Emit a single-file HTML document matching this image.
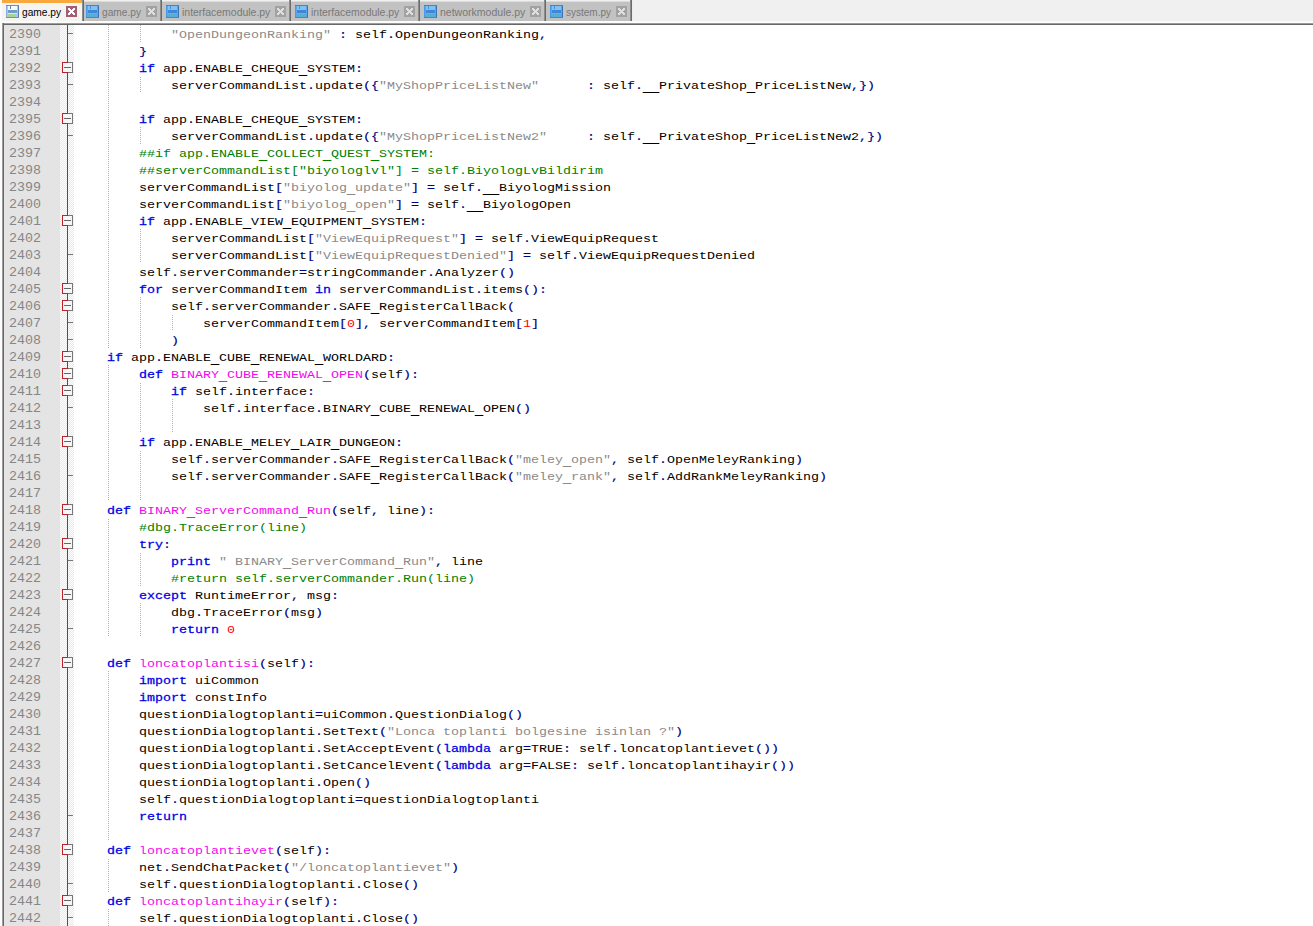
<!DOCTYPE html>
<html><head><meta charset="utf-8"><title>game.py - Notepad++</title>
<style>
html,body{margin:0;padding:0}
body{width:1313px;height:926px;overflow:hidden;background:#f0f0f0;position:relative;font-family:"Liberation Sans",sans-serif}
#tabbar{position:absolute;left:0;top:0;width:1313px;height:23px;background:#f0f0f0}
.tb{position:absolute;top:1px;height:20px;background:#c2c2c2;border-top:1px solid #dcdcdc;box-sizing:border-box}
.tb.act{top:0;height:22px;background:#f5f4f1;border-top:3px solid #f8a83c}
.sep{position:absolute;top:0;width:2px;height:22px;background:linear-gradient(90deg,#8c8c8c 50%,#6b6b6b 50%)}
.sepl{position:absolute;top:1px;width:1px;height:20px;background:#ececec}
.ic{position:absolute;top:5px;width:13px;height:13px}
.cl{position:absolute;top:6px;width:11px;height:11px}
.tx{position:absolute;top:4px;font-size:11px;line-height:17px;white-space:nowrap;color:#787878;transform-origin:0 50%}
.tx.act{color:#000}
#lwhite{position:absolute;left:0;top:0;width:2px;height:926px;background:#fdfdfd}
#bline1{position:absolute;left:0;top:21px;width:1313px;height:2px;background:#fcfcfc}
#bline2{position:absolute;left:2px;top:23px;width:1311px;height:2px;background:linear-gradient(#9c9c9c 50%,#686868 50%)}
#lline{position:absolute;left:2px;top:23px;width:2px;height:903px;background:linear-gradient(90deg,#9c9c9c 50%,#686868 50%)}
#ed{position:absolute;left:4px;top:25px;width:1309px;height:901px;background:#fff}
#lnm{position:absolute;left:4px;top:25px;width:56px;height:901px;background:#e4e4e4}
#fm{position:absolute;left:60px;top:25px;width:14px;height:901px;background:repeating-conic-gradient(#ffffff 0% 25%,#e8e8e8 0% 50%) 0 0/2px 2px}
#fl{position:absolute;left:67px;top:25px;width:1px;height:901px;background:#b8242a}
.ln,.r{font-family:"Liberation Mono",monospace;font-size:13.333px;line-height:17px;height:17px;white-space:pre}
.r>span{display:block;height:17px;transform:translateY(1px) scaleY(.88);transform-origin:0 12px}
.ln>span{display:block;height:17px;transform:translateY(1px) scaleY(.97);transform-origin:0 12px}
.ln{color:#868686}
#nums{position:absolute;left:9px;top:25px}
#code{position:absolute;left:75px;top:25px;color:#000}
.u{position:relative;top:3.4px;text-decoration:none;font-weight:bold;-webkit-text-stroke:0.4px currentColor}
.k{color:#0000e4;-webkit-text-stroke:0.3px #0000e4}
.o{color:#000080;-webkit-text-stroke:0.18px #000080}
.s{color:#8a8a8a}
.c{color:#008000}
.n{color:#ff0000}
.d{color:#f408ec}
.g{position:absolute;width:1px;background:linear-gradient(#b0b0b0 50%,#fff 50%) 0 0/1px 2px}
.g.e{background:linear-gradient(#fff 50%,#b0b0b0 50%) 0 0/1px 2px}
.bx{position:absolute;left:62px;width:11px;height:11px;box-sizing:border-box;background:#f6f6f6;border:1px solid #777;border-left-color:#b8242a}
.bx:before{content:"";position:absolute;left:-1px;top:-1px;width:6px;height:1px;background:#b8242a}
.bx:after{content:"";position:absolute;left:-1px;bottom:-1px;width:6px;height:1px;background:#b8242a}
.bx b{position:absolute;left:1px;top:4px;width:7px;height:1px;background:#666}
.tk{position:absolute;left:68px;width:5px;height:1px;background:#777}
</style></head><body>
<div id="tabbar">
<div class="tb act" style="left:2px;width:80px"></div><div class="sep" style="left:82px"></div>
<svg class="ic" style="left:6px" viewBox="0 0 13 13" shape-rendering="crispEdges"><rect width="13" height="13" fill="#6f8cc6"/><rect x="0" y="1" width="1" height="11" fill="#8fa9e6"/><rect x="12" y="1" width="1" height="11" fill="#5f7db4"/><rect x="1" y="1" width="11" height="11" fill="#a9c6ee"/><rect x="2" y="1" width="9" height="4" fill="#f6fbff"/><rect x="4" y="1" width="1" height="3" fill="#6c7fa6"/><rect x="2" y="5" width="9" height="3" fill="#6f9fc8"/><rect x="2" y="8" width="9" height="1" fill="#d3e9f3"/><rect x="2" y="9" width="8" height="3" fill="#a9d391"/></svg><span class="tx act" style="left:22px;transform:scaleX(0.9249)">game.py</span><svg class="cl" style="left:66px" viewBox="0 0 11 11" shape-rendering="crispEdges"><rect width="11" height="11" fill="#a05f77"/><g fill="#ffffff"><rect x="2" y="2" width="1" height="1"/><rect x="3" y="2" width="1" height="1"/><rect x="7" y="2" width="1" height="1"/><rect x="8" y="2" width="1" height="1"/><rect x="2" y="3" width="1" height="1"/><rect x="3" y="3" width="1" height="1"/><rect x="4" y="3" width="1" height="1"/><rect x="6" y="3" width="1" height="1"/><rect x="7" y="3" width="1" height="1"/><rect x="8" y="3" width="1" height="1"/><rect x="3" y="4" width="1" height="1"/><rect x="4" y="4" width="1" height="1"/><rect x="5" y="4" width="1" height="1"/><rect x="6" y="4" width="1" height="1"/><rect x="7" y="4" width="1" height="1"/><rect x="4" y="5" width="1" height="1"/><rect x="5" y="5" width="1" height="1"/><rect x="6" y="5" width="1" height="1"/><rect x="3" y="6" width="1" height="1"/><rect x="4" y="6" width="1" height="1"/><rect x="5" y="6" width="1" height="1"/><rect x="6" y="6" width="1" height="1"/><rect x="7" y="6" width="1" height="1"/><rect x="2" y="7" width="1" height="1"/><rect x="3" y="7" width="1" height="1"/><rect x="4" y="7" width="1" height="1"/><rect x="6" y="7" width="1" height="1"/><rect x="7" y="7" width="1" height="1"/><rect x="8" y="7" width="1" height="1"/><rect x="2" y="8" width="1" height="1"/><rect x="3" y="8" width="1" height="1"/><rect x="7" y="8" width="1" height="1"/><rect x="8" y="8" width="1" height="1"/></g></svg>
<div class="tb" style="left:84px;width:76px"></div><div class="sep" style="left:160px"></div><div class="sepl" style="left:162px"></div>
<svg class="ic" style="left:86px" viewBox="0 0 13 13" shape-rendering="crispEdges"><rect width="13" height="13" fill="#3f86cf"/><rect x="0" y="1" width="1" height="11" fill="#4a98e8"/><rect x="12" y="1" width="1" height="11" fill="#3a74b4"/><rect x="1" y="1" width="11" height="11" fill="#5aa6ea"/><rect x="2" y="1" width="9" height="4" fill="#7dc2f2"/><rect x="4" y="1" width="1" height="3" fill="#4f8fcf"/><rect x="2" y="5" width="9" height="3" fill="#3f86d8"/><rect x="2" y="8" width="9" height="1" fill="#66b0ea"/><rect x="2" y="9" width="8" height="3" fill="#58aed0"/></svg><span class="tx" style="left:102px;transform:scaleX(0.9249)">game.py</span><svg class="cl" style="left:146px" viewBox="0 0 11 11" shape-rendering="crispEdges"><rect width="11" height="11" fill="#a2a2a2"/><g fill="#dedede"><rect x="2" y="2" width="1" height="1"/><rect x="3" y="2" width="1" height="1"/><rect x="7" y="2" width="1" height="1"/><rect x="8" y="2" width="1" height="1"/><rect x="2" y="3" width="1" height="1"/><rect x="3" y="3" width="1" height="1"/><rect x="4" y="3" width="1" height="1"/><rect x="6" y="3" width="1" height="1"/><rect x="7" y="3" width="1" height="1"/><rect x="8" y="3" width="1" height="1"/><rect x="3" y="4" width="1" height="1"/><rect x="4" y="4" width="1" height="1"/><rect x="5" y="4" width="1" height="1"/><rect x="6" y="4" width="1" height="1"/><rect x="7" y="4" width="1" height="1"/><rect x="4" y="5" width="1" height="1"/><rect x="5" y="5" width="1" height="1"/><rect x="6" y="5" width="1" height="1"/><rect x="3" y="6" width="1" height="1"/><rect x="4" y="6" width="1" height="1"/><rect x="5" y="6" width="1" height="1"/><rect x="6" y="6" width="1" height="1"/><rect x="7" y="6" width="1" height="1"/><rect x="2" y="7" width="1" height="1"/><rect x="3" y="7" width="1" height="1"/><rect x="4" y="7" width="1" height="1"/><rect x="6" y="7" width="1" height="1"/><rect x="7" y="7" width="1" height="1"/><rect x="8" y="7" width="1" height="1"/><rect x="2" y="8" width="1" height="1"/><rect x="3" y="8" width="1" height="1"/><rect x="7" y="8" width="1" height="1"/><rect x="8" y="8" width="1" height="1"/></g></svg>
<div class="tb" style="left:162px;width:127px"></div><div class="sep" style="left:289px"></div><div class="sepl" style="left:291px"></div>
<svg class="ic" style="left:166px" viewBox="0 0 13 13" shape-rendering="crispEdges"><rect width="13" height="13" fill="#3f86cf"/><rect x="0" y="1" width="1" height="11" fill="#4a98e8"/><rect x="12" y="1" width="1" height="11" fill="#3a74b4"/><rect x="1" y="1" width="11" height="11" fill="#5aa6ea"/><rect x="2" y="1" width="9" height="4" fill="#7dc2f2"/><rect x="4" y="1" width="1" height="3" fill="#4f8fcf"/><rect x="2" y="5" width="9" height="3" fill="#3f86d8"/><rect x="2" y="8" width="9" height="1" fill="#66b0ea"/><rect x="2" y="9" width="8" height="3" fill="#58aed0"/></svg><span class="tx" style="left:182px;transform:scaleX(0.9505)">interfacemodule.py</span><svg class="cl" style="left:275px" viewBox="0 0 11 11" shape-rendering="crispEdges"><rect width="11" height="11" fill="#a2a2a2"/><g fill="#dedede"><rect x="2" y="2" width="1" height="1"/><rect x="3" y="2" width="1" height="1"/><rect x="7" y="2" width="1" height="1"/><rect x="8" y="2" width="1" height="1"/><rect x="2" y="3" width="1" height="1"/><rect x="3" y="3" width="1" height="1"/><rect x="4" y="3" width="1" height="1"/><rect x="6" y="3" width="1" height="1"/><rect x="7" y="3" width="1" height="1"/><rect x="8" y="3" width="1" height="1"/><rect x="3" y="4" width="1" height="1"/><rect x="4" y="4" width="1" height="1"/><rect x="5" y="4" width="1" height="1"/><rect x="6" y="4" width="1" height="1"/><rect x="7" y="4" width="1" height="1"/><rect x="4" y="5" width="1" height="1"/><rect x="5" y="5" width="1" height="1"/><rect x="6" y="5" width="1" height="1"/><rect x="3" y="6" width="1" height="1"/><rect x="4" y="6" width="1" height="1"/><rect x="5" y="6" width="1" height="1"/><rect x="6" y="6" width="1" height="1"/><rect x="7" y="6" width="1" height="1"/><rect x="2" y="7" width="1" height="1"/><rect x="3" y="7" width="1" height="1"/><rect x="4" y="7" width="1" height="1"/><rect x="6" y="7" width="1" height="1"/><rect x="7" y="7" width="1" height="1"/><rect x="8" y="7" width="1" height="1"/><rect x="2" y="8" width="1" height="1"/><rect x="3" y="8" width="1" height="1"/><rect x="7" y="8" width="1" height="1"/><rect x="8" y="8" width="1" height="1"/></g></svg>
<div class="tb" style="left:291px;width:127px"></div><div class="sep" style="left:418px"></div><div class="sepl" style="left:420px"></div>
<svg class="ic" style="left:295px" viewBox="0 0 13 13" shape-rendering="crispEdges"><rect width="13" height="13" fill="#3f86cf"/><rect x="0" y="1" width="1" height="11" fill="#4a98e8"/><rect x="12" y="1" width="1" height="11" fill="#3a74b4"/><rect x="1" y="1" width="11" height="11" fill="#5aa6ea"/><rect x="2" y="1" width="9" height="4" fill="#7dc2f2"/><rect x="4" y="1" width="1" height="3" fill="#4f8fcf"/><rect x="2" y="5" width="9" height="3" fill="#3f86d8"/><rect x="2" y="8" width="9" height="1" fill="#66b0ea"/><rect x="2" y="9" width="8" height="3" fill="#58aed0"/></svg><span class="tx" style="left:311px;transform:scaleX(0.9505)">interfacemodule.py</span><svg class="cl" style="left:404px" viewBox="0 0 11 11" shape-rendering="crispEdges"><rect width="11" height="11" fill="#a2a2a2"/><g fill="#dedede"><rect x="2" y="2" width="1" height="1"/><rect x="3" y="2" width="1" height="1"/><rect x="7" y="2" width="1" height="1"/><rect x="8" y="2" width="1" height="1"/><rect x="2" y="3" width="1" height="1"/><rect x="3" y="3" width="1" height="1"/><rect x="4" y="3" width="1" height="1"/><rect x="6" y="3" width="1" height="1"/><rect x="7" y="3" width="1" height="1"/><rect x="8" y="3" width="1" height="1"/><rect x="3" y="4" width="1" height="1"/><rect x="4" y="4" width="1" height="1"/><rect x="5" y="4" width="1" height="1"/><rect x="6" y="4" width="1" height="1"/><rect x="7" y="4" width="1" height="1"/><rect x="4" y="5" width="1" height="1"/><rect x="5" y="5" width="1" height="1"/><rect x="6" y="5" width="1" height="1"/><rect x="3" y="6" width="1" height="1"/><rect x="4" y="6" width="1" height="1"/><rect x="5" y="6" width="1" height="1"/><rect x="6" y="6" width="1" height="1"/><rect x="7" y="6" width="1" height="1"/><rect x="2" y="7" width="1" height="1"/><rect x="3" y="7" width="1" height="1"/><rect x="4" y="7" width="1" height="1"/><rect x="6" y="7" width="1" height="1"/><rect x="7" y="7" width="1" height="1"/><rect x="8" y="7" width="1" height="1"/><rect x="2" y="8" width="1" height="1"/><rect x="3" y="8" width="1" height="1"/><rect x="7" y="8" width="1" height="1"/><rect x="8" y="8" width="1" height="1"/></g></svg>
<div class="tb" style="left:420px;width:124px"></div><div class="sep" style="left:544px"></div><div class="sepl" style="left:546px"></div>
<svg class="ic" style="left:424px" viewBox="0 0 13 13" shape-rendering="crispEdges"><rect width="13" height="13" fill="#3f86cf"/><rect x="0" y="1" width="1" height="11" fill="#4a98e8"/><rect x="12" y="1" width="1" height="11" fill="#3a74b4"/><rect x="1" y="1" width="11" height="11" fill="#5aa6ea"/><rect x="2" y="1" width="9" height="4" fill="#7dc2f2"/><rect x="4" y="1" width="1" height="3" fill="#4f8fcf"/><rect x="2" y="5" width="9" height="3" fill="#3f86d8"/><rect x="2" y="8" width="9" height="1" fill="#66b0ea"/><rect x="2" y="9" width="8" height="3" fill="#58aed0"/></svg><span class="tx" style="left:440px;transform:scaleX(0.9560)">networkmodule.py</span><svg class="cl" style="left:530px" viewBox="0 0 11 11" shape-rendering="crispEdges"><rect width="11" height="11" fill="#a2a2a2"/><g fill="#dedede"><rect x="2" y="2" width="1" height="1"/><rect x="3" y="2" width="1" height="1"/><rect x="7" y="2" width="1" height="1"/><rect x="8" y="2" width="1" height="1"/><rect x="2" y="3" width="1" height="1"/><rect x="3" y="3" width="1" height="1"/><rect x="4" y="3" width="1" height="1"/><rect x="6" y="3" width="1" height="1"/><rect x="7" y="3" width="1" height="1"/><rect x="8" y="3" width="1" height="1"/><rect x="3" y="4" width="1" height="1"/><rect x="4" y="4" width="1" height="1"/><rect x="5" y="4" width="1" height="1"/><rect x="6" y="4" width="1" height="1"/><rect x="7" y="4" width="1" height="1"/><rect x="4" y="5" width="1" height="1"/><rect x="5" y="5" width="1" height="1"/><rect x="6" y="5" width="1" height="1"/><rect x="3" y="6" width="1" height="1"/><rect x="4" y="6" width="1" height="1"/><rect x="5" y="6" width="1" height="1"/><rect x="6" y="6" width="1" height="1"/><rect x="7" y="6" width="1" height="1"/><rect x="2" y="7" width="1" height="1"/><rect x="3" y="7" width="1" height="1"/><rect x="4" y="7" width="1" height="1"/><rect x="6" y="7" width="1" height="1"/><rect x="7" y="7" width="1" height="1"/><rect x="8" y="7" width="1" height="1"/><rect x="2" y="8" width="1" height="1"/><rect x="3" y="8" width="1" height="1"/><rect x="7" y="8" width="1" height="1"/><rect x="8" y="8" width="1" height="1"/></g></svg>
<div class="tb" style="left:546px;width:84px"></div><div class="sep" style="left:630px"></div><div class="sepl" style="left:632px"></div>
<svg class="ic" style="left:550px" viewBox="0 0 13 13" shape-rendering="crispEdges"><rect width="13" height="13" fill="#3f86cf"/><rect x="0" y="1" width="1" height="11" fill="#4a98e8"/><rect x="12" y="1" width="1" height="11" fill="#3a74b4"/><rect x="1" y="1" width="11" height="11" fill="#5aa6ea"/><rect x="2" y="1" width="9" height="4" fill="#7dc2f2"/><rect x="4" y="1" width="1" height="3" fill="#4f8fcf"/><rect x="2" y="5" width="9" height="3" fill="#3f86d8"/><rect x="2" y="8" width="9" height="1" fill="#66b0ea"/><rect x="2" y="9" width="8" height="3" fill="#58aed0"/></svg><span class="tx" style="left:566px;transform:scaleX(0.9091)">system.py</span><svg class="cl" style="left:616px" viewBox="0 0 11 11" shape-rendering="crispEdges"><rect width="11" height="11" fill="#a2a2a2"/><g fill="#dedede"><rect x="2" y="2" width="1" height="1"/><rect x="3" y="2" width="1" height="1"/><rect x="7" y="2" width="1" height="1"/><rect x="8" y="2" width="1" height="1"/><rect x="2" y="3" width="1" height="1"/><rect x="3" y="3" width="1" height="1"/><rect x="4" y="3" width="1" height="1"/><rect x="6" y="3" width="1" height="1"/><rect x="7" y="3" width="1" height="1"/><rect x="8" y="3" width="1" height="1"/><rect x="3" y="4" width="1" height="1"/><rect x="4" y="4" width="1" height="1"/><rect x="5" y="4" width="1" height="1"/><rect x="6" y="4" width="1" height="1"/><rect x="7" y="4" width="1" height="1"/><rect x="4" y="5" width="1" height="1"/><rect x="5" y="5" width="1" height="1"/><rect x="6" y="5" width="1" height="1"/><rect x="3" y="6" width="1" height="1"/><rect x="4" y="6" width="1" height="1"/><rect x="5" y="6" width="1" height="1"/><rect x="6" y="6" width="1" height="1"/><rect x="7" y="6" width="1" height="1"/><rect x="2" y="7" width="1" height="1"/><rect x="3" y="7" width="1" height="1"/><rect x="4" y="7" width="1" height="1"/><rect x="6" y="7" width="1" height="1"/><rect x="7" y="7" width="1" height="1"/><rect x="8" y="7" width="1" height="1"/><rect x="2" y="8" width="1" height="1"/><rect x="3" y="8" width="1" height="1"/><rect x="7" y="8" width="1" height="1"/><rect x="8" y="8" width="1" height="1"/></g></svg>
</div>
<div id="lwhite"></div><div id="bline1"></div><div id="bline2"></div><div id="lline"></div>
<div id="ed"></div><div id="lnm"></div><div id="fm"></div><div id="fl"></div>
<i class="g" style="left:108px;top:25px;height:323px"></i><i class="g" style="left:108px;top:365px;height:136px"></i><i class="g e" style="left:108px;top:518px;height:119px"></i><i class="g" style="left:108px;top:671px;height:170px"></i><i class="g e" style="left:108px;top:858px;height:34px"></i><i class="g" style="left:108px;top:909px;height:17px"></i><i class="g" style="left:140px;top:25px;height:17px"></i><i class="g e" style="left:140px;top:76px;height:17px"></i><i class="g" style="left:140px;top:127px;height:17px"></i><i class="g" style="left:140px;top:229px;height:34px"></i><i class="g" style="left:140px;top:297px;height:51px"></i><i class="g e" style="left:140px;top:382px;height:51px"></i><i class="g e" style="left:140px;top:450px;height:51px"></i><i class="g e" style="left:140px;top:552px;height:34px"></i><i class="g" style="left:140px;top:603px;height:34px"></i><i class="g e" style="left:172px;top:314px;height:17px"></i><i class="g" style="left:172px;top:399px;height:34px"></i>
<i class="tk" style="top:33px"></i><i class="bx" style="top:62px"><b></b></i><i class="tk" style="top:84px"></i><i class="bx" style="top:113px"><b></b></i><i class="tk" style="top:135px"></i><i class="bx" style="top:215px"><b></b></i><i class="tk" style="top:254px"></i><i class="bx" style="top:283px"><b></b></i><i class="bx" style="top:300px"><b></b></i><i class="tk" style="top:322px"></i><i class="tk" style="top:339px"></i><i class="bx" style="top:351px"><b></b></i><i class="bx" style="top:368px"><b></b></i><i class="bx" style="top:385px"><b></b></i><i class="tk" style="top:407px"></i><i class="bx" style="top:436px"><b></b></i><i class="tk" style="top:475px"></i><i class="bx" style="top:504px"><b></b></i><i class="bx" style="top:538px"><b></b></i><i class="tk" style="top:560px"></i><i class="bx" style="top:589px"><b></b></i><i class="tk" style="top:628px"></i><i class="bx" style="top:657px"><b></b></i><i class="tk" style="top:815px"></i><i class="bx" style="top:844px"><b></b></i><i class="tk" style="top:883px"></i><i class="bx" style="top:895px"><b></b></i><i class="tk" style="top:917px"></i>
<div id="nums">
<div class="ln"><span>2390</span></div>
<div class="ln"><span>2391</span></div>
<div class="ln"><span>2392</span></div>
<div class="ln"><span>2393</span></div>
<div class="ln"><span>2394</span></div>
<div class="ln"><span>2395</span></div>
<div class="ln"><span>2396</span></div>
<div class="ln"><span>2397</span></div>
<div class="ln"><span>2398</span></div>
<div class="ln"><span>2399</span></div>
<div class="ln"><span>2400</span></div>
<div class="ln"><span>2401</span></div>
<div class="ln"><span>2402</span></div>
<div class="ln"><span>2403</span></div>
<div class="ln"><span>2404</span></div>
<div class="ln"><span>2405</span></div>
<div class="ln"><span>2406</span></div>
<div class="ln"><span>2407</span></div>
<div class="ln"><span>2408</span></div>
<div class="ln"><span>2409</span></div>
<div class="ln"><span>2410</span></div>
<div class="ln"><span>2411</span></div>
<div class="ln"><span>2412</span></div>
<div class="ln"><span>2413</span></div>
<div class="ln"><span>2414</span></div>
<div class="ln"><span>2415</span></div>
<div class="ln"><span>2416</span></div>
<div class="ln"><span>2417</span></div>
<div class="ln"><span>2418</span></div>
<div class="ln"><span>2419</span></div>
<div class="ln"><span>2420</span></div>
<div class="ln"><span>2421</span></div>
<div class="ln"><span>2422</span></div>
<div class="ln"><span>2423</span></div>
<div class="ln"><span>2424</span></div>
<div class="ln"><span>2425</span></div>
<div class="ln"><span>2426</span></div>
<div class="ln"><span>2427</span></div>
<div class="ln"><span>2428</span></div>
<div class="ln"><span>2429</span></div>
<div class="ln"><span>2430</span></div>
<div class="ln"><span>2431</span></div>
<div class="ln"><span>2432</span></div>
<div class="ln"><span>2433</span></div>
<div class="ln"><span>2434</span></div>
<div class="ln"><span>2435</span></div>
<div class="ln"><span>2436</span></div>
<div class="ln"><span>2437</span></div>
<div class="ln"><span>2438</span></div>
<div class="ln"><span>2439</span></div>
<div class="ln"><span>2440</span></div>
<div class="ln"><span>2441</span></div>
<div class="ln"><span>2442</span></div>
</div>
<div id="code">
<div class="r"><span>            <span class="s">&quot;OpenDungeonRanking&quot;</span> <span class="o">:</span> self<span class="o">.</span>OpenDungeonRanking<span class="o">,</span></span></div>
<div class="r"><span>        <span class="o">}</span></span></div>
<div class="r"><span>        <span class="k">if</span> app<span class="o">.</span>ENABLE<u class="u">_</u>CHEQUE<u class="u">_</u>SYSTEM<span class="o">:</span></span></div>
<div class="r"><span>            serverCommandList<span class="o">.</span>update<span class="o">({</span><span class="s">&quot;MyShopPriceListNew&quot;</span>      <span class="o">:</span> self<span class="o">.</span><u class="u">__</u>PrivateShop<u class="u">_</u>PriceListNew<span class="o">,})</span></span></div>
<div class="r"></div>
<div class="r"><span>        <span class="k">if</span> app<span class="o">.</span>ENABLE<u class="u">_</u>CHEQUE<u class="u">_</u>SYSTEM<span class="o">:</span></span></div>
<div class="r"><span>            serverCommandList<span class="o">.</span>update<span class="o">({</span><span class="s">&quot;MyShopPriceListNew2&quot;</span>     <span class="o">:</span> self<span class="o">.</span><u class="u">__</u>PrivateShop<u class="u">_</u>PriceListNew2<span class="o">,})</span></span></div>
<div class="r"><span>        <span class="c">##if app.ENABLE<u class="u">_</u>COLLECT<u class="u">_</u>QUEST<u class="u">_</u>SYSTEM:</span></span></div>
<div class="r"><span>        <span class="c">##serverCommandList[&quot;biyologlvl&quot;] = self.BiyologLvBildirim</span></span></div>
<div class="r"><span>        serverCommandList<span class="o">[</span><span class="s">&quot;biyolog<u class="u">_</u>update&quot;</span><span class="o">]</span> <span class="o">=</span> self<span class="o">.</span><u class="u">__</u>BiyologMission</span></div>
<div class="r"><span>        serverCommandList<span class="o">[</span><span class="s">&quot;biyolog<u class="u">_</u>open&quot;</span><span class="o">]</span> <span class="o">=</span> self<span class="o">.</span><u class="u">__</u>BiyologOpen</span></div>
<div class="r"><span>        <span class="k">if</span> app<span class="o">.</span>ENABLE<u class="u">_</u>VIEW<u class="u">_</u>EQUIPMENT<u class="u">_</u>SYSTEM<span class="o">:</span></span></div>
<div class="r"><span>            serverCommandList<span class="o">[</span><span class="s">&quot;ViewEquipRequest&quot;</span><span class="o">]</span> <span class="o">=</span> self<span class="o">.</span>ViewEquipRequest</span></div>
<div class="r"><span>            serverCommandList<span class="o">[</span><span class="s">&quot;ViewEquipRequestDenied&quot;</span><span class="o">]</span> <span class="o">=</span> self<span class="o">.</span>ViewEquipRequestDenied</span></div>
<div class="r"><span>        self<span class="o">.</span>serverCommander<span class="o">=</span>stringCommander<span class="o">.</span>Analyzer<span class="o">()</span></span></div>
<div class="r"><span>        <span class="k">for</span> serverCommandItem <span class="k">in</span> serverCommandList<span class="o">.</span>items<span class="o">():</span></span></div>
<div class="r"><span>            self<span class="o">.</span>serverCommander<span class="o">.</span>SAFE<u class="u">_</u>RegisterCallBack<span class="o">(</span></span></div>
<div class="r"><span>                serverCommandItem<span class="o">[</span><span class="n">0</span><span class="o">]</span><span class="o">,</span> serverCommandItem<span class="o">[</span><span class="n">1</span><span class="o">]</span></span></div>
<div class="r"><span>            <span class="o">)</span></span></div>
<div class="r"><span>    <span class="k">if</span> app<span class="o">.</span>ENABLE<u class="u">_</u>CUBE<u class="u">_</u>RENEWAL<u class="u">_</u>WORLDARD<span class="o">:</span></span></div>
<div class="r"><span>        <span class="k">def</span> <span class="d">BINARY<u class="u">_</u>CUBE<u class="u">_</u>RENEWAL<u class="u">_</u>OPEN</span><span class="o">(</span>self<span class="o">):</span></span></div>
<div class="r"><span>            <span class="k">if</span> self<span class="o">.</span>interface<span class="o">:</span></span></div>
<div class="r"><span>                self<span class="o">.</span>interface<span class="o">.</span>BINARY<u class="u">_</u>CUBE<u class="u">_</u>RENEWAL<u class="u">_</u>OPEN<span class="o">()</span></span></div>
<div class="r"></div>
<div class="r"><span>        <span class="k">if</span> app<span class="o">.</span>ENABLE<u class="u">_</u>MELEY<u class="u">_</u>LAIR<u class="u">_</u>DUNGEON<span class="o">:</span></span></div>
<div class="r"><span>            self<span class="o">.</span>serverCommander<span class="o">.</span>SAFE<u class="u">_</u>RegisterCallBack<span class="o">(</span><span class="s">&quot;meley<u class="u">_</u>open&quot;</span><span class="o">,</span> self<span class="o">.</span>OpenMeleyRanking<span class="o">)</span></span></div>
<div class="r"><span>            self<span class="o">.</span>serverCommander<span class="o">.</span>SAFE<u class="u">_</u>RegisterCallBack<span class="o">(</span><span class="s">&quot;meley<u class="u">_</u>rank&quot;</span><span class="o">,</span> self<span class="o">.</span>AddRankMeleyRanking<span class="o">)</span></span></div>
<div class="r"></div>
<div class="r"><span>    <span class="k">def</span> <span class="d">BINARY<u class="u">_</u>ServerCommand<u class="u">_</u>Run</span><span class="o">(</span>self<span class="o">,</span> line<span class="o">):</span></span></div>
<div class="r"><span>        <span class="c">#dbg.TraceError(line)</span></span></div>
<div class="r"><span>        <span class="k">try</span><span class="o">:</span></span></div>
<div class="r"><span>            <span class="k">print</span> <span class="s">&quot; BINARY<u class="u">_</u>ServerCommand<u class="u">_</u>Run&quot;</span><span class="o">,</span> line</span></div>
<div class="r"><span>            <span class="c">#return self.serverCommander.Run(line)</span></span></div>
<div class="r"><span>        <span class="k">except</span> RuntimeError<span class="o">,</span> msg<span class="o">:</span></span></div>
<div class="r"><span>            dbg<span class="o">.</span>TraceError<span class="o">(</span>msg<span class="o">)</span></span></div>
<div class="r"><span>            <span class="k">return</span> <span class="n">0</span></span></div>
<div class="r"></div>
<div class="r"><span>    <span class="k">def</span> <span class="d">loncatoplantisi</span><span class="o">(</span>self<span class="o">):</span></span></div>
<div class="r"><span>        <span class="k">import</span> uiCommon</span></div>
<div class="r"><span>        <span class="k">import</span> constInfo</span></div>
<div class="r"><span>        questionDialogtoplanti<span class="o">=</span>uiCommon<span class="o">.</span>QuestionDialog<span class="o">()</span></span></div>
<div class="r"><span>        questionDialogtoplanti<span class="o">.</span>SetText<span class="o">(</span><span class="s">&quot;Lonca toplanti bolgesine isinlan ?&quot;</span><span class="o">)</span></span></div>
<div class="r"><span>        questionDialogtoplanti<span class="o">.</span>SetAcceptEvent<span class="o">(</span><span class="k">lambda</span> arg<span class="o">=</span>TRUE<span class="o">:</span> self<span class="o">.</span>loncatoplantievet<span class="o">())</span></span></div>
<div class="r"><span>        questionDialogtoplanti<span class="o">.</span>SetCancelEvent<span class="o">(</span><span class="k">lambda</span> arg<span class="o">=</span>FALSE<span class="o">:</span> self<span class="o">.</span>loncatoplantihayir<span class="o">())</span></span></div>
<div class="r"><span>        questionDialogtoplanti<span class="o">.</span>Open<span class="o">()</span></span></div>
<div class="r"><span>        self<span class="o">.</span>questionDialogtoplanti<span class="o">=</span>questionDialogtoplanti</span></div>
<div class="r"><span>        <span class="k">return</span></span></div>
<div class="r"></div>
<div class="r"><span>    <span class="k">def</span> <span class="d">loncatoplantievet</span><span class="o">(</span>self<span class="o">):</span></span></div>
<div class="r"><span>        net<span class="o">.</span>SendChatPacket<span class="o">(</span><span class="s">&quot;/loncatoplantievet&quot;</span><span class="o">)</span></span></div>
<div class="r"><span>        self<span class="o">.</span>questionDialogtoplanti<span class="o">.</span>Close<span class="o">()</span></span></div>
<div class="r"><span>    <span class="k">def</span> <span class="d">loncatoplantihayir</span><span class="o">(</span>self<span class="o">):</span></span></div>
<div class="r"><span>        self<span class="o">.</span>questionDialogtoplanti<span class="o">.</span>Close<span class="o">()</span></span></div>
</div>
</body></html>
